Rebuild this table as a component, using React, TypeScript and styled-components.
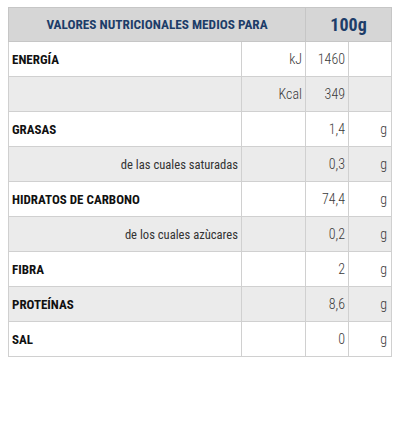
import React from "react";
import styled, { createGlobalStyle } from "styled-components";

const Global = createGlobalStyle`
  html, body { margin: 0; padding: 0; background: #ffffff; }
  body { padding: 7px 9px 0 8px; }
`;

const Table = styled.table`
  width: 383px;
  border-collapse: collapse;
  table-layout: fixed;
  font-family: "Roboto Condensed", "Liberation Sans", sans-serif;
`;

const HeadRow = styled.tr`
  background: #d6d6d6;
  height: 34px;
`;

const HeadCell = styled.th<{ $big?: boolean }>`
  border: 1px solid #c6c6c6;
  color: #1d3d69;
  font-weight: 700;
  font-size: ${(p) => (p.$big ? "18px" : "13.3px")};
  text-align: center;
  padding: 0;
`;

const Row = styled.tr<{ $shade?: boolean }>`
  background: ${(p) => (p.$shade ? "#ebebeb" : "#ffffff")};
  height: 35px;
`;

const Cell = styled.td`
  border: 1px solid #d0d0d0;
  padding: 0 3px 0 0;
  font-size: 14px;
  font-weight: 300;
  color: #3a3a3a;
  text-align: right;
  white-space: nowrap;
`;

const Label = styled(Cell)<{ $sub?: boolean }>`
  text-align: ${(p) => (p.$sub ? "right" : "left")};
  font-weight: ${(p) => (p.$sub ? 400 : 700)};
  font-size: ${(p) => (p.$sub ? "12.6px" : "13px")};
  color: ${(p) => (p.$sub ? "#333333" : "#111111")};
  padding: ${(p) => (p.$sub ? "0 3px 0 0" : "0 0 0 3px")};
`;

const Unit = styled(Cell)`
  padding-right: 4px;
`;

type R = { label: string; sub?: boolean; unit?: string; value: string; g?: boolean };

const rows: R[] = [
  { label: "ENERGÍA", unit: "kJ", value: "1460" },
  { label: "", unit: "Kcal", value: "349" },
  { label: "GRASAS", value: "1,4", g: true },
  { label: "de las cuales saturadas", sub: true, value: "0,3", g: true },
  { label: "HIDRATOS DE CARBONO", value: "74,4", g: true },
  { label: "de los cuales azùcares", sub: true, value: "0,2", g: true },
  { label: "FIBRA", value: "2", g: true },
  { label: "PROTEÍNAS", value: "8,6", g: true },
  { label: "SAL", value: "0", g: true },
];

export default function App() {
  return (
    <>
      <Global />
      <Table>
        <colgroup>
          <col style={{ width: 233 }} />
          <col style={{ width: 64 }} />
          <col style={{ width: 43 }} />
          <col style={{ width: 43 }} />
        </colgroup>
        <thead>
          <HeadRow>
            <HeadCell colSpan={2}>VALORES NUTRICIONALES MEDIOS PARA</HeadCell>
            <HeadCell colSpan={2} $big>
              100g
            </HeadCell>
          </HeadRow>
        </thead>
        <tbody>
          {rows.map((r, i) => (
            <Row key={i} $shade={i % 2 === 1}>
              <Label $sub={r.sub}>{r.label}</Label>
              <Cell>{r.unit ?? ""}</Cell>
              <Cell>{r.value}</Cell>
              <Unit>{r.g ? "g" : ""}</Unit>
            </Row>
          ))}
        </tbody>
      </Table>
    </>
  );
}
